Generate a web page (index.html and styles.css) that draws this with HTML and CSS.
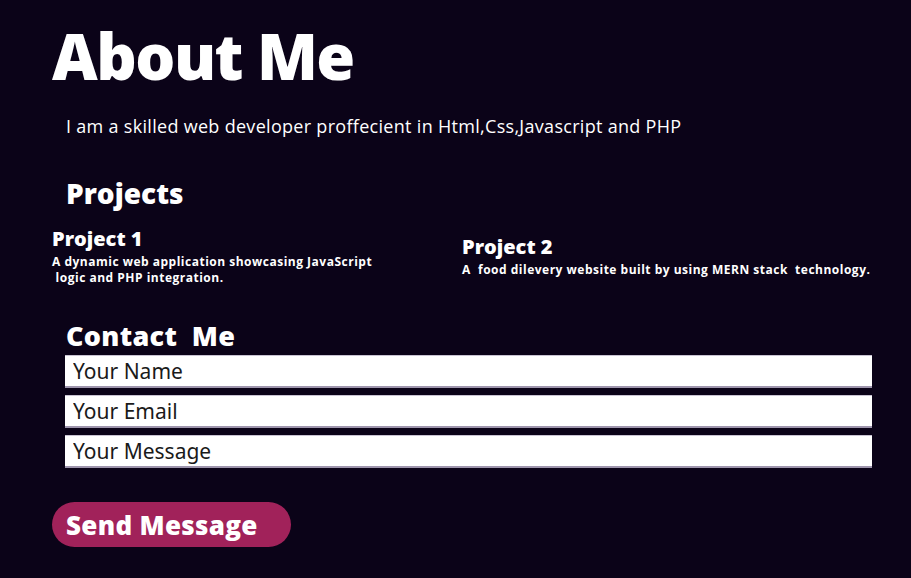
FILE: index.html
```html
<!DOCTYPE html>
<html lang="en">
<head>
<meta charset="utf-8">
<title>About Me</title>
<link rel="stylesheet" href="styles.css">
</head>
<body>
<main class="page">
  <h1 class="title">About Me</h1>
  <p class="intro">I am a skilled web developer proffecient in Html,Css,Javascript and PHP</p>

  <h2 class="section-title projects-title">Projects</h2>
  <div class="projects">
    <div class="project project-1">
      <h3 class="project-name">Project 1</h3>
      <p class="project-desc">A dynamic web application showcasing JavaScript<br>&nbsp;logic and PHP integration.</p>
    </div>
    <div class="project project-2">
      <h3 class="project-name">Project 2</h3>
      <p class="project-desc">A&nbsp; food dilevery website built by using MERN stack&nbsp; technology.</p>
    </div>
  </div>

  <h2 class="section-title contact-title">Contact&nbsp; Me</h2>
  <form class="contact-form">
    <input class="field" type="text" placeholder="Your Name">
    <input class="field" type="email" placeholder="Your Email">
    <input class="field" type="text" placeholder="Your Message">
    <button class="send" type="button">Send Message</button>
  </form>
</main>
</body>
</html>
```

FILE: styles.css
```css
html, body {
  margin: 0;
  padding: 0;
  background: #0b0318;
  color: #ffffff;
  font-family: "Open Sans", "Liberation Sans", sans-serif;
}

.page {
  padding: 20px 39px 0 52px;
  display: flex;
  flex-direction: column;
}

.title {
  margin: 0;
  font-size: 63px;
  font-weight: 800;
  line-height: 72px;
  letter-spacing: -1.5px;
}

.intro {
  margin: 22px 0 0 14px;
  font-size: 18px;
  line-height: 24px;
  font-weight: 400;
  letter-spacing: 0.3px;
}

.section-title {
  margin: 0;
  font-weight: 800;
}

.projects-title {
  margin: 39px 0 0 14px;
  font-size: 28px;
  line-height: 32px;
}

.projects {
  display: grid;
  grid-template-columns: 410px 1fr;
  margin-top: 18px;
}

.project-name {
  margin: 0;
  font-size: 20px;
  line-height: 24px;
  font-weight: 800;
}

.project-2 {
  padding-top: 8px;
}

.project-desc {
  margin: 3px 0 0 0;
  font-size: 12px;
  line-height: 16px;
  font-weight: 700;
  letter-spacing: 0.5px;
}

.contact-title {
  margin: 35px 0 0 14px;
  font-size: 27px;
  line-height: 30px;
  letter-spacing: 0.3px;
}

.contact-form {
  display: flex;
  flex-direction: column;
  gap: 7px;
  margin: 4px 0 0 13px;
}

.field {
  box-sizing: border-box;
  height: 33px;
  margin: 0;
  padding: 0 8px;
  border: none;
  border-top: 1px solid #c9c3d2;
  border-bottom: 2px solid #9e95ad;
  background: #ffffff;
  font-family: "Noto Sans", "Open Sans", sans-serif;
  font-size: 21px;
  color: #111;
}

.field::placeholder {
  color: #1a1a1a;
  opacity: 1;
}

.send {
  align-self: flex-start;
  margin: 27px 0 0 -13px;
  width: 239px;
  height: 45px;
  border: none;
  border-radius: 23px;
  background: #a1225a;
  color: #ffffff;
  font-family: "Open Sans", "Liberation Sans", sans-serif;
  font-size: 26px;
  font-weight: 800;
  letter-spacing: 0.3px;
  text-align: left;
  padding: 0 0 0 14px;
}
```
